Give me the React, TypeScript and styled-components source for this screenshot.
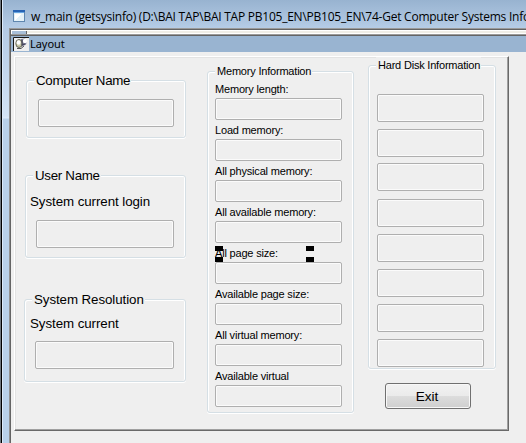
import React from "react";
import styled, { createGlobalStyle } from "styled-components";

const Global = createGlobalStyle`
  * { box-sizing: border-box; }
  html, body { margin: 0; width: 526px; height: 443px; overflow: hidden; }
  body { background: #efefef; color: #000; font-family: "Liberation Sans", Arial, sans-serif; }
`;

const Desktop = styled.div`
  width: 526px;
  height: 443px;
  overflow: hidden;
  display: flex;
  background: #efefef;
`;

const OuterEdge = styled.div`
  width: 3px;
  flex: none;
  border-left: 1px solid #70777e;
  border-right: 1px solid #dceafa;
  background: #000;
`;

const Frame = styled.div`
  width: 523px;
  flex: none;
  display: flex;
  flex-direction: column;
  background: linear-gradient(#98b4d2 0, #b4cae4 28px, #d3e3f5 116px, #dceafa 118px, #b9d1ea 119px);
`;

const TitleBar = styled.header`
  height: 28px;
  flex: none;
  display: flex;
  align-items: center;
  padding: 4px 0 0 10px;
  background: linear-gradient(#98b3d0, #b5cce6);
`;

const Title = styled.span`
  margin: 2px 0 0 6px;
  white-space: nowrap;
  font: 12px/16px "Open Sans", sans-serif;
  letter-spacing: -0.24px;
`;

const Client = styled.main`
  flex: 1;
  margin-left: 6px;
  border-top: 1px solid #9a9a9a;
  border-left: 1px solid #929292;
  box-shadow: inset 1px 1px 0 #646464;
  padding: 1px 0 0 1px;
  background: #efefef;
`;

const Strip = styled.div`
  display: flex;
  height: 4px;
  background: #efede6;
  border: solid #fff;
  border-width: 1px 0;
`;

const StripTab = styled.div`
  width: 16px;
  height: 3px;
  background: #a9bfd8;
  border-left: 1px solid #fff;
  border-right: 1px solid #666;
`;

const ToolBar = styled.div`
  height: 18px;
  display: flex;
  align-items: center;
  padding-left: 2px;
  border-top: 1px solid #9a9a9a;
  box-shadow: inset 0 1px 0 #646464;
  background: #99b4d1;
`;

const ToolLabel = styled.span`
  margin-left: 1px;
  font: 11px/15px "Noto Sans", sans-serif;
  letter-spacing: -0.05px;
`;

const Panel = styled.section`
  width: 495px;
  height: 375px;
  margin: 4px 0 0 3px;
  display: grid;
  grid-template-columns: 193px 161px 139px;
  border: 1px solid;
  border-color: #fff #696969 #696969 #fff;
  box-shadow: inset -1px -1px 0 #a0a0a0, inset 1px 1px 0 #e3e3e3;
`;

const Column = styled.div<{ $top: number }>`
  display: flex;
  flex-direction: column;
  align-items: flex-start;
  padding-top: ${(p) => p.$top}px;
`;

const Group = styled.div<{ $w: number; $h: number; $left: number; $top?: number }>`
  width: ${(p) => p.$w}px;
  height: ${(p) => p.$h}px;
  flex: none;
  margin: ${(p) => p.$top ?? 0}px 0 0 ${(p) => p.$left}px;
  display: flex;
  flex-direction: column;
  align-items: flex-start;
  border: 1px solid #d5dfe5;
  border-radius: 3px;
  box-shadow: inset 1px 1px 0 #fff, inset -1px 0 0 #fff, 0 1px 0 #fff;
`;

const Legend = styled.div<{ $small?: boolean; $w: number; $spacing?: number }>`
  width: ${(p) => p.$w}px;
  height: 16px;
  margin: -9px 0 0 7px;
  padding-left: 2px;
  background: #efefef;
  white-space: nowrap;
  font-size: ${(p) => (p.$small ? 11 : 13.33)}px;
  letter-spacing: ${(p) => p.$spacing ?? -0.2}px;
  line-height: ${(p) => (p.$small ? 16 : 18)}px;
`;

const Caption = styled.div<{ $top: number; $left: number }>`
  height: 18px;
  margin: ${(p) => p.$top}px 0 0 ${(p) => p.$left}px;
  font-size: 13.33px;
  letter-spacing: -0.07px;
  line-height: 18px;
  white-space: nowrap;
`;

const Field = styled.div<{ $w: number; $h: number; $left: number; $top: number }>`
  width: ${(p) => p.$w}px;
  height: ${(p) => p.$h}px;
  flex: none;
  margin: ${(p) => p.$top}px 0 0 ${(p) => p.$left}px;
  border: 1px solid #afafaf;
  border-radius: 2px;
  box-shadow: inset 0 0 0 1px #fbfbfb;
`;

const MemoryItem = styled.div`
  height: 41px;
  padding-left: 7px;
`;

const MemoryLabel = styled.div`
  position: relative;
  width: 99px;
  height: 19px;
  line-height: 21px;
  font-size: 11px;
  letter-spacing: -0.18px;
  white-space: nowrap;
`;

const Handle = styled.i<{ $right?: boolean; $bottom?: boolean }>`
  position: absolute;
  left: ${(p) => (p.$right ? 91 : 0)}px;
  top: ${(p) => (p.$bottom ? 14 : 3)}px;
  width: 8px;
  height: 5px;
  background: #000;
`;

const ExitButton = styled.button`
  width: 86px;
  height: 26px;
  margin: 14px 0 0 16px;
  padding: 1px 2px 0 0;
  border: 1px solid #707070;
  border-radius: 3px;
  box-shadow: inset 0 0 0 1px #f8f8f8;
  background: linear-gradient(#f2f2f2 0, #ebebeb 48%, #dddddd 49%, #cfcfcf 100%);
  font: 13.6px/22px "Liberation Sans", Arial, sans-serif;
  color: #000;
`;

const memory = [
  "Memory length:",
  "Load memory:",
  "All physical memory:",
  "All available memory:",
  "All page size:",
  "Available page size:",
  "All virtual memory:",
  "Available virtual",
];

const diskGaps = [21, 7, 6, 8, 7, 7, 7, 7];

const Glyph = styled.svg`
  flex: none;
`;

const WindowIcon = () => (
  <Glyph width="12" height="12" viewBox="0 0 12 12" shapeRendering="crispEdges">
    <rect width="12" height="12" fill="#5f86ae" />
    <rect x="1" y="3" width="10" height="8" fill="#e4f1f8" />
    <rect width="12" height="2" fill="#2763b4" />
    <rect x="1" y="2" width="10" height="1" fill="#65a5e3" />
    <path d="M2 10V4h7L2 10Z" fill="#fff" />
  </Glyph>
);

const LayoutIcon = () => (
  <Glyph width="16" height="14" viewBox="0 0 16 14">
    <rect width="16" height="14" fill="#efefef" />
    <path d="M.5 14V.5H16" fill="none" stroke="#171717" />
    <path d="M4 11.5h4l3-2.5" fill="none" stroke="#555" />
    <path d="M8 2l4-.5 2 2-1 4-4 2-3-2Z" fill="#777790" />
    <ellipse cx="6" cy="6.5" rx="3.2" ry="4" fill="#c9c9a8" stroke="#66665a" />
    <ellipse cx="5.6" cy="5.5" rx="2" ry="2.3" fill="#fff" />
    <circle cx="12" cy="4" r="2.2" fill="#fff" />
    <path d="M9 3v5l3-1" fill="none" stroke="#44445a" />
  </Glyph>
);

export default function App() {
  return (
    <>
      <Global />
      <Desktop>
        <OuterEdge />
        <Frame>
          <TitleBar>
            <WindowIcon />
            <Title>w_main (getsysinfo) (D:\BAI TAP\BAI TAP PB105_EN\PB105_EN\74-Get Computer Systems Info</Title>
          </TitleBar>
          <Client>
            <Strip><StripTab /></Strip>
            <ToolBar><LayoutIcon /><ToolLabel>Layout</ToolLabel></ToolBar>
            <Panel>
              <Column $top={23}>
                <Group $w={160} $h={58} $left={11}>
                  <Legend $w={97} $spacing={-0.27}>Computer Name</Legend>
                  <Field $w={136} $h={28} $left={11} $top={11} />
                </Group>
                <Group $w={161} $h={83} $left={10} $top={37}>
                  <Legend $w={68} $spacing={-0.3}>User Name</Legend>
                  <Caption $top={10} $left={4}>System current login</Caption>
                  <Field $w={138} $h={28} $left={10} $top={9} />
                </Group>
                <Group $w={162} $h={83} $left={9} $top={41}>
                  <Legend $w={113} $spacing={-0.08}>System Resolution</Legend>
                  <Caption $top={8} $left={5}>System current</Caption>
                  <Field $w={139} $h={28} $left={10} $top={8} />
                </Group>
              </Column>
              <Column $top={14}>
                <Group $w={147} $h={342} $left={-1}>
                  <Legend $small $w={97}>Memory Information</Legend>
                  {memory.map((label) => (
                    <MemoryItem key={label}>
                      <MemoryLabel>
                        {label}
                        {label === "All page size:" && (
                          <>
                            <Handle />
                            <Handle $right />
                            <Handle $bottom />
                            <Handle $right $bottom />
                          </>
                        )}
                      </MemoryLabel>
                      <Field $w={127} $h={22} $left={0} $top={0} />
                    </MemoryItem>
                  ))}
                </Group>
              </Column>
              <Column $top={8}>
                <Group $w={128} $h={304} $left={-1}>
                  <Legend $small $w={105}>Hard Disk Information</Legend>
                  {diskGaps.map((gap, i) => (
                    <Field key={i} $w={107} $h={28} $left={8} $top={gap} />
                  ))}
                </Group>
                <ExitButton>Exit</ExitButton>
              </Column>
            </Panel>
          </Client>
        </Frame>
      </Desktop>
    </>
  );
}
